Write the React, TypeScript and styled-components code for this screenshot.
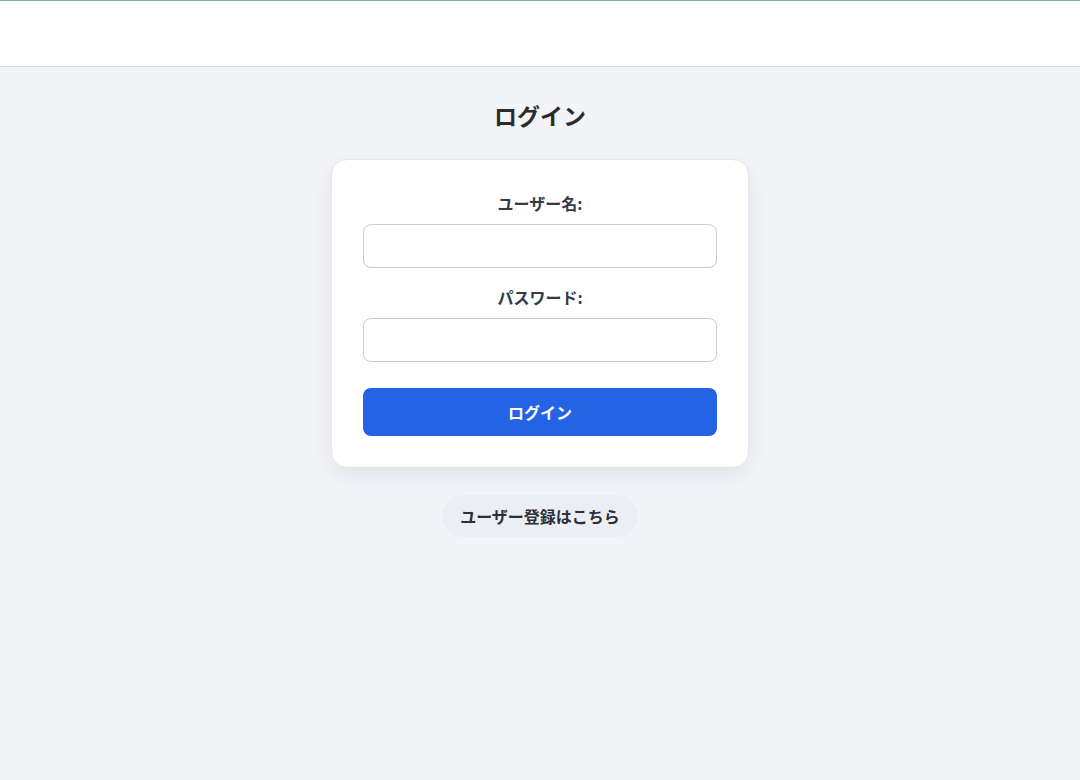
import React from 'react';
import styled, { createGlobalStyle } from 'styled-components';

const GlobalStyle = createGlobalStyle`
  html, body {
    margin: 0;
    padding: 0;
    background: #f3f4f8;
    font-family: "Noto Sans CJK JP", "Noto Sans", sans-serif;
  }
  * { box-sizing: border-box; }
`;

const Header = styled.header`
  height: 67px;
  background: #ffffff;
  border-top: 1px solid #8aabb0;
  border-bottom: 1px solid #dcdde1;
`;

const Main = styled.main`
  display: flex;
  flex-direction: column;
  align-items: center;
  padding-top: 31px;
`;

const Title = styled.h1`
  margin: 0 0 27px;
  font-size: 23px;
  line-height: 34px;
  font-weight: 700;
  color: #2b2b2e;
`;

const Card = styled.form`
  width: 418px;
  background: #ffffff;
  border: 1px solid #e3e5ea;
  border-radius: 16px;
  box-shadow: 0 8px 24px rgba(30, 40, 70, 0.08);
  padding: 32px 31px 31px;
  display: flex;
  flex-direction: column;
`;

const Field = styled.div<{ $gap: number }>`
  display: flex;
  flex-direction: column;
  align-items: center;
  margin-bottom: ${(p) => p.$gap}px;
`;

const Label = styled.label`
  font-size: 16px;
  line-height: 22px;
  font-weight: 700;
  color: #343a46;
  margin-bottom: 10px;
`;

const Input = styled.input`
  width: 100%;
  height: 44px;
  border: 1px solid #c9ccd4;
  border-radius: 8px;
  background: #ffffff;
  padding: 0 12px;
  font-size: 15px;
  outline: none;
`;

const SubmitButton = styled.button`
  height: 48px;
  border: none;
  border-radius: 8px;
  background: #2463e4;
  color: #ffffff;
  font-family: inherit;
  font-size: 16px;
  font-weight: 700;
  cursor: pointer;
`;

const RegisterLink = styled.a`
  margin-top: 27px;
  height: 42px;
  padding: 0 18px;
  display: inline-flex;
  align-items: center;
  border-radius: 21px;
  background: #eceef6;
  color: #2e2f33;
  font-size: 16px;
  font-weight: 700;
  text-decoration: none;
  cursor: pointer;
`;

export default function App() {
  return (
    <>
      <GlobalStyle />
      <Header />
      <Main>
        <Title>ログイン</Title>
        <Card onSubmit={(e) => e.preventDefault()}>
          <Field $gap={18}>
            <Label htmlFor="username">ユーザー名:</Label>
            <Input id="username" type="text" />
          </Field>
          <Field $gap={26}>
            <Label htmlFor="password">パスワード:</Label>
            <Input id="password" type="password" />
          </Field>
          <SubmitButton type="submit">ログイン</SubmitButton>
        </Card>
        <RegisterLink>ユーザー登録はこちら</RegisterLink>
      </Main>
    </>
  );
}
